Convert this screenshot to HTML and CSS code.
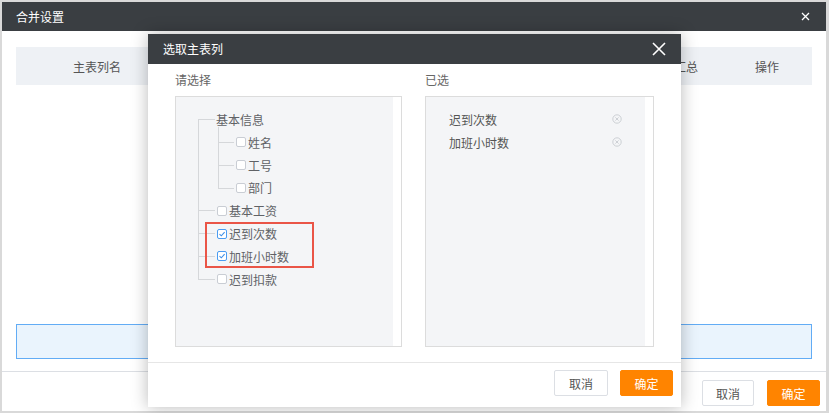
FILE: index.html
```html
<!DOCTYPE html>
<html lang="zh-CN">
<head>
  <meta charset="UTF-8" />
  <title>合并设置</title>
  <link rel="stylesheet" href="styles.css">
</head>
<body>
  <!-- outer dialog -->
  <div class="dialog">
    <div class="dialog-head">
      <span class="dialog-title">合并设置</span>
      <svg class="close-sm" width="9" height="9" viewBox="0 0 9 9"><path d="M1 1L8 8M8 1L1 8" stroke="#fff" stroke-width="1.3"/></svg>
    </div>
    <div class="dialog-body">
      <div class="table-head">
        <div class="col col-name">主表列名</div>
        <div class="col col-fill"></div>
        <div class="col col-sum">是否汇总</div>
        <div class="col col-op">操作</div>
      </div>
      <div class="spacer"></div>
      <div class="drop-row"></div>
    </div>
    <div class="dialog-foot">
      <button class="btn">取消</button>
      <button class="btn btn-primary">确定</button>
    </div>
  </div>

  <!-- picker dialog on top -->
  <div class="picker">
    <div class="picker-head">
      <span class="dialog-title">选取主表列</span>
      <svg class="close-lg" width="14" height="14" viewBox="0 0 14 14"><path d="M1 1L13 13M13 1L1 13" stroke="#fff" stroke-width="1.6"/></svg>
    </div>
    <div class="picker-body">
      <div class="cols">
        <div class="col-label">请选择</div>
        <div class="col-label">已选</div>
        <div class="panel">
          <div class="panel-inner">
            <ul class="tree">
              <li class="node">
                <div class="node-row">基本信息</div>
                <ul class="tree sub">
                  <li class="node"><div class="node-row"><i class="check"></i>姓名</div></li>
                  <li class="node"><div class="node-row"><i class="check"></i>工号</div></li>
                  <li class="node"><div class="node-row"><i class="check"></i>部门</div></li>
                </ul>
              </li>
              <li class="node"><div class="node-row"><i class="check"></i>基本工资</div></li>
              <li class="node"><div class="node-row"><i class="check on"><svg width="8" height="8" viewBox="0 0 8 8"><path d="M1.5 4.2L3.3 5.8L6.6 2.2" fill="none" stroke="#3d8fe8" stroke-width="1.1"/></svg></i>迟到次数</div></li>
              <li class="node"><div class="node-row"><i class="check on"><svg width="8" height="8" viewBox="0 0 8 8"><path d="M1.5 4.2L3.3 5.8L6.6 2.2" fill="none" stroke="#3d8fe8" stroke-width="1.1"/></svg></i>加班小时数</div></li>
              <li class="node"><div class="node-row"><i class="check"></i>迟到扣款</div></li>
            </ul>
            <div class="mark"></div>
          </div>
        </div>
        <div class="panel">
          <div class="panel-inner">
            <ul class="picked">
              <li>迟到次数<svg width="10" height="10" viewBox="0 0 10 10"><circle cx="5" cy="5" r="4.2" fill="none" stroke="#c3c6cc" stroke-width="0.8"/><path d="M3.4 3.4L6.6 6.6M6.6 3.4L3.4 6.6" stroke="#c3c6cc" stroke-width="0.8"/></svg></li>
              <li>加班小时数<svg width="10" height="10" viewBox="0 0 10 10"><circle cx="5" cy="5" r="4.2" fill="none" stroke="#c3c6cc" stroke-width="0.8"/><path d="M3.4 3.4L6.6 6.6M6.6 3.4L3.4 6.6" stroke="#c3c6cc" stroke-width="0.8"/></svg></li>
            </ul>
          </div>
        </div>
      </div>
    </div>
    <div class="picker-foot">
      <button class="btn btn-md">取消</button>
      <button class="btn btn-md btn-primary">确定</button>
    </div>
  </div>
</body>
</html>
```

FILE: styles.css
```css
* {
  margin: 0;
  padding: 0;
  box-sizing: border-box;
}

body {
  font-family: "Noto Sans CJK SC", "Noto Sans", sans-serif;
  font-size: 12px;
  color: #555;
  background: #d9d9d9;
  width: 829px;
  height: 413px;
  overflow: hidden;
}

/* Outer dialog */
.dialog {
  margin: 2px 0 0 2px;
  width: 824px;
  height: 409px;
  background: #fff;
  display: flex;
  flex-direction: column;
}

.dialog-head {
  height: 29px;
  background: #3a3e42;
  display: flex;
  align-items: center;
  justify-content: space-between;
  padding: 0 16px 0 14px;
}

.dialog-title {
  color: #fff;
  font-size: 12px;
  line-height: 16px;
}

.dialog-body {
  flex: 1;
  padding: 16px 14px 12px;
  display: flex;
  flex-direction: column;
}

.table-head {
  height: 38px;
  background: #eef1f5;
  display: flex;
  align-items: center;
}

.col {
  text-align: center;
  color: #555;
}

.col-name { width: 162px; }
.col-fill { flex: 1; }
.col-sum { width: 96px; }
.col-op { width: 90px; }

.spacer {
  flex: 1;
}

.drop-row {
  height: 35px;
  background: #eaf4fd;
  border: 1px solid #62acf5;
}

.dialog-foot {
  border-top: 1px solid #dcdfe4;
  padding: 8px 6px 5px;
  display: flex;
  justify-content: flex-end;
  gap: 13px;
}

/* Buttons */
.btn {
  font-family: inherit;
  font-size: 12px;
  width: 52px;
  height: 26px;
  border: 1px solid #dcdfe4;
  background: #fff;
  color: #555;
  border-radius: 2px;
}

.btn-primary {
  background: #ff8400;
  border-color: #ff8400;
  color: #fff;
  width: 53px;
}

.btn-md {
  width: 54px;
}

.btn-md.btn-primary {
  width: 53px;
}

/* Picker dialog */
.picker {
  position: absolute;
  left: 148px;
  top: 34px;
  width: 533px;
  height: 373px;
  background: #fff;
  box-shadow: 0 0 16px rgba(0, 0, 0, 0.28);
  display: flex;
  flex-direction: column;
}

.picker-head {
  height: 30px;
  background: #3a3e42;
  display: flex;
  align-items: center;
  justify-content: space-between;
  padding: 0 15px;
}

.picker-body {
  padding: 8px 27px 0;
}

.cols {
  display: grid;
  grid-template-columns: 227px 229px;
  column-gap: 23px;
}

.col-label {
  line-height: 16px;
  height: 16px;
  margin-bottom: 8px;
  color: #666;
}

.panel {
  height: 251px;
  border: 1px solid #dcdcdc;
  background: #fff;
  padding-right: 8px;
}

.panel-inner {
  height: 100%;
  background: #f4f5f7;
  position: relative;
}

/* Tree */
.tree {
  list-style: none;
  padding: 11px 0 0 22px;
}

.tree.sub {
  padding: 0 0 0 2px;
}

.node {
  position: relative;
  padding-left: 18px;
}

.sub .node {
  padding-left: 17px;
}

.node::before {
  content: '';
  position: absolute;
  left: 0;
  top: 11px;
  width: 17px;
  border-top: 1px solid #d5d7da;
}

.sub .node::before {
  width: 16px;
}

.node::after {
  content: '';
  position: absolute;
  left: 0;
  top: 0;
  bottom: 0;
  border-left: 1px solid #d5d7da;
}

.node:first-child::after {
  top: 11px;
}

.sub .node:first-child::after {
  top: -4px;
}

.node:last-child::after {
  bottom: auto;
  height: 12px;
}

.node-row {
  height: 22.85px;
  display: flex;
  align-items: center;
  color: #606266;
}

.check {
  display: inline-flex;
  align-items: center;
  justify-content: center;
  width: 10px;
  height: 10px;
  margin: 0 2px 0 1px;
  border: 1px solid #c9cdd4;
  border-radius: 2px;
  background: #fff;
}

.check.on {
  border-color: #4a9cf2;
}

.mark {
  position: absolute;
  left: 29px;
  top: 125px;
  width: 109px;
  height: 46px;
  border: 2px solid #ea5547;
}

/* Picked list */
.picked {
  list-style: none;
  padding: 11px 23px 0;
}

.picked li {
  height: 22.85px;
  display: flex;
  align-items: center;
  justify-content: space-between;
  color: #555;
}

.picker-foot {
  margin-top: 15px;
  border-top: 1px solid #e6e6e6;
  padding: 7px 8px 0;
  display: flex;
  justify-content: flex-end;
  gap: 12px;
}
```
